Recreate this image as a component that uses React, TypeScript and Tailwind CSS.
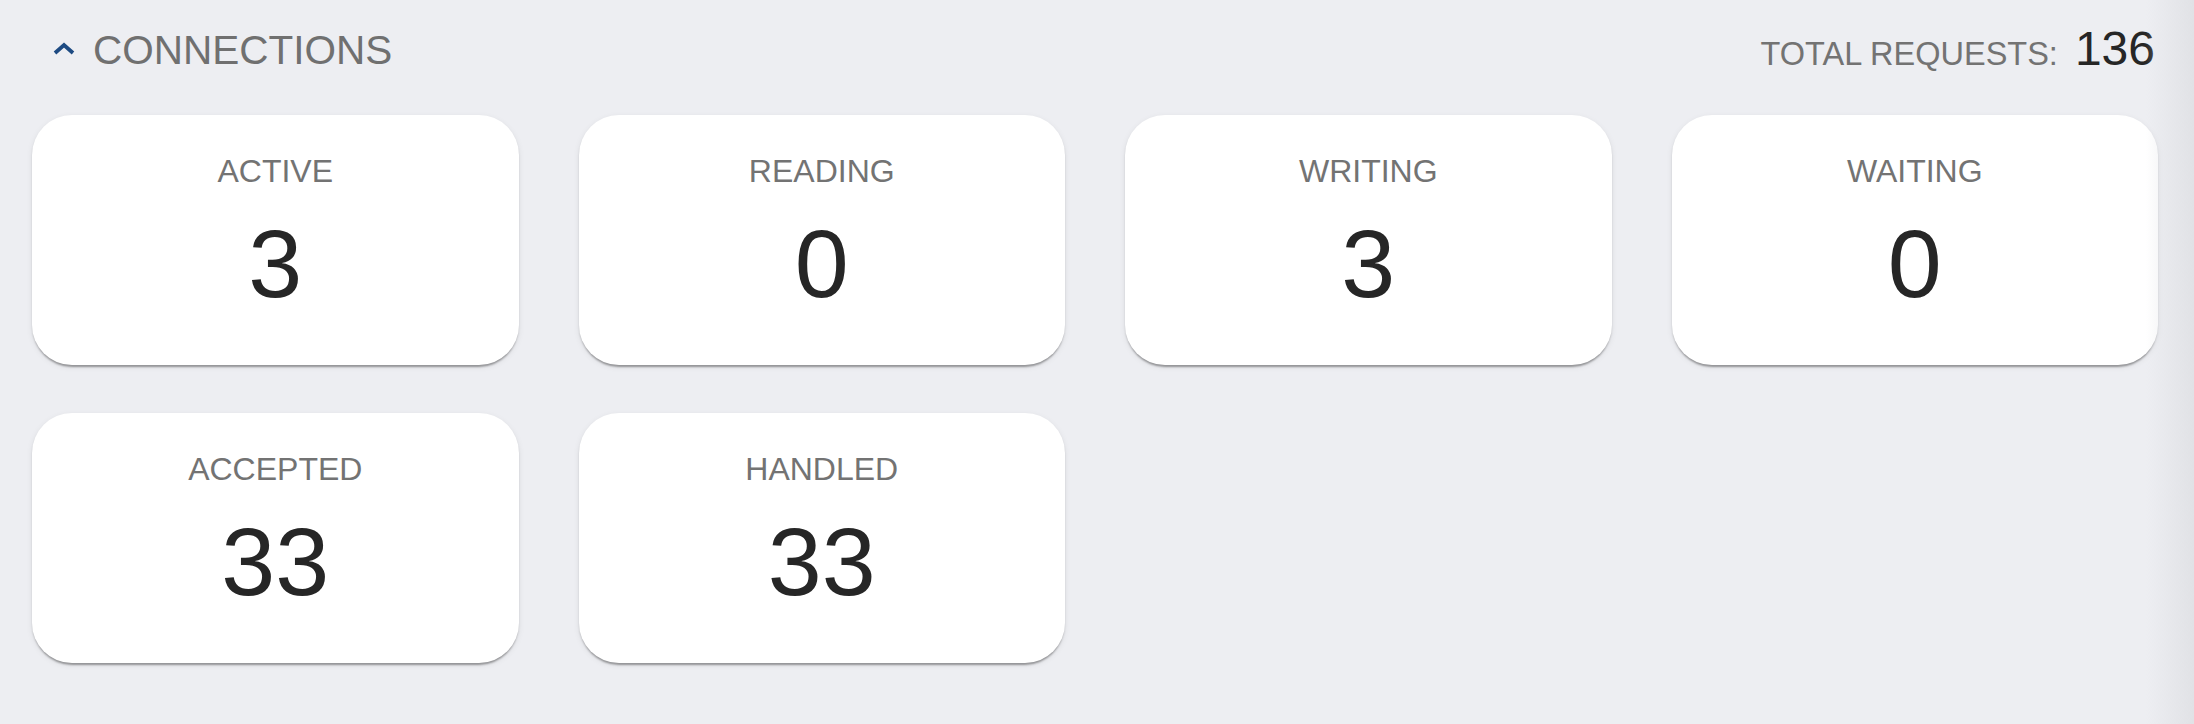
import React from "react";

const cards = [
  { label: "ACTIVE", value: "3" },
  { label: "READING", value: "0" },
  { label: "WRITING", value: "3" },
  { label: "WAITING", value: "0" },
  { label: "ACCEPTED", value: "33" },
  { label: "HANDLED", value: "33" },
];

function Card({ label, value }: { label: string; value: string }) {
  return (
    <div className="h-[250px] rounded-[40px] bg-white shadow-[0_4px_2px_-2px_rgba(0,0,0,0.25),0_2px_2px_0_rgba(0,0,0,0.12),0_2px_6px_0_rgba(0,0,0,0.08)] flex flex-col items-center pt-[40px]">
      <div className="text-[32px] leading-none text-[#737373]">{label}</div>
      <div className="mt-[28px] text-[97px] leading-none text-[#262626]">{value}</div>
    </div>
  );
}

export default function App() {
  return (
    <div
      className="relative w-full h-[724px] bg-[#edeef2] pl-[32px] pr-[36px] overflow-hidden"
      style={{ fontFamily: '"Liberation Sans", Arial, sans-serif' }}
    >
      <div className="flex justify-between items-start pt-[25px]">
        <div className="flex items-center mt-[5px] ml-[21px]">
          <svg width="22" height="13" viewBox="0 0 22 13" className="-mt-[3px]">
            <polyline
              points="2,11 11,3 20,11"
              fill="none"
              stroke="#1d4a82"
              strokeWidth="3.8"
            />
          </svg>
          <div className="ml-[18px] text-[40.5px] leading-none text-[#707070]">CONNECTIONS</div>
        </div>
        <div className="flex items-baseline mr-[3px]">
          <div className="text-[32.5px] leading-none text-[#737373]">TOTAL REQUESTS:</div>
          <div className="ml-[17px] text-[48px] leading-none text-[#262626]">136</div>
        </div>
      </div>
      <div className="grid grid-cols-4 gap-x-[60px] gap-y-[48px] mt-[42px]">
        {cards.map((c) => (
          <Card key={c.label} label={c.label} value={c.value} />
        ))}
      </div>
      <div className="pointer-events-none absolute top-0 right-0 h-full w-[48px] bg-gradient-to-r from-transparent to-[#e1e2e6]" />
    </div>
  );
}
